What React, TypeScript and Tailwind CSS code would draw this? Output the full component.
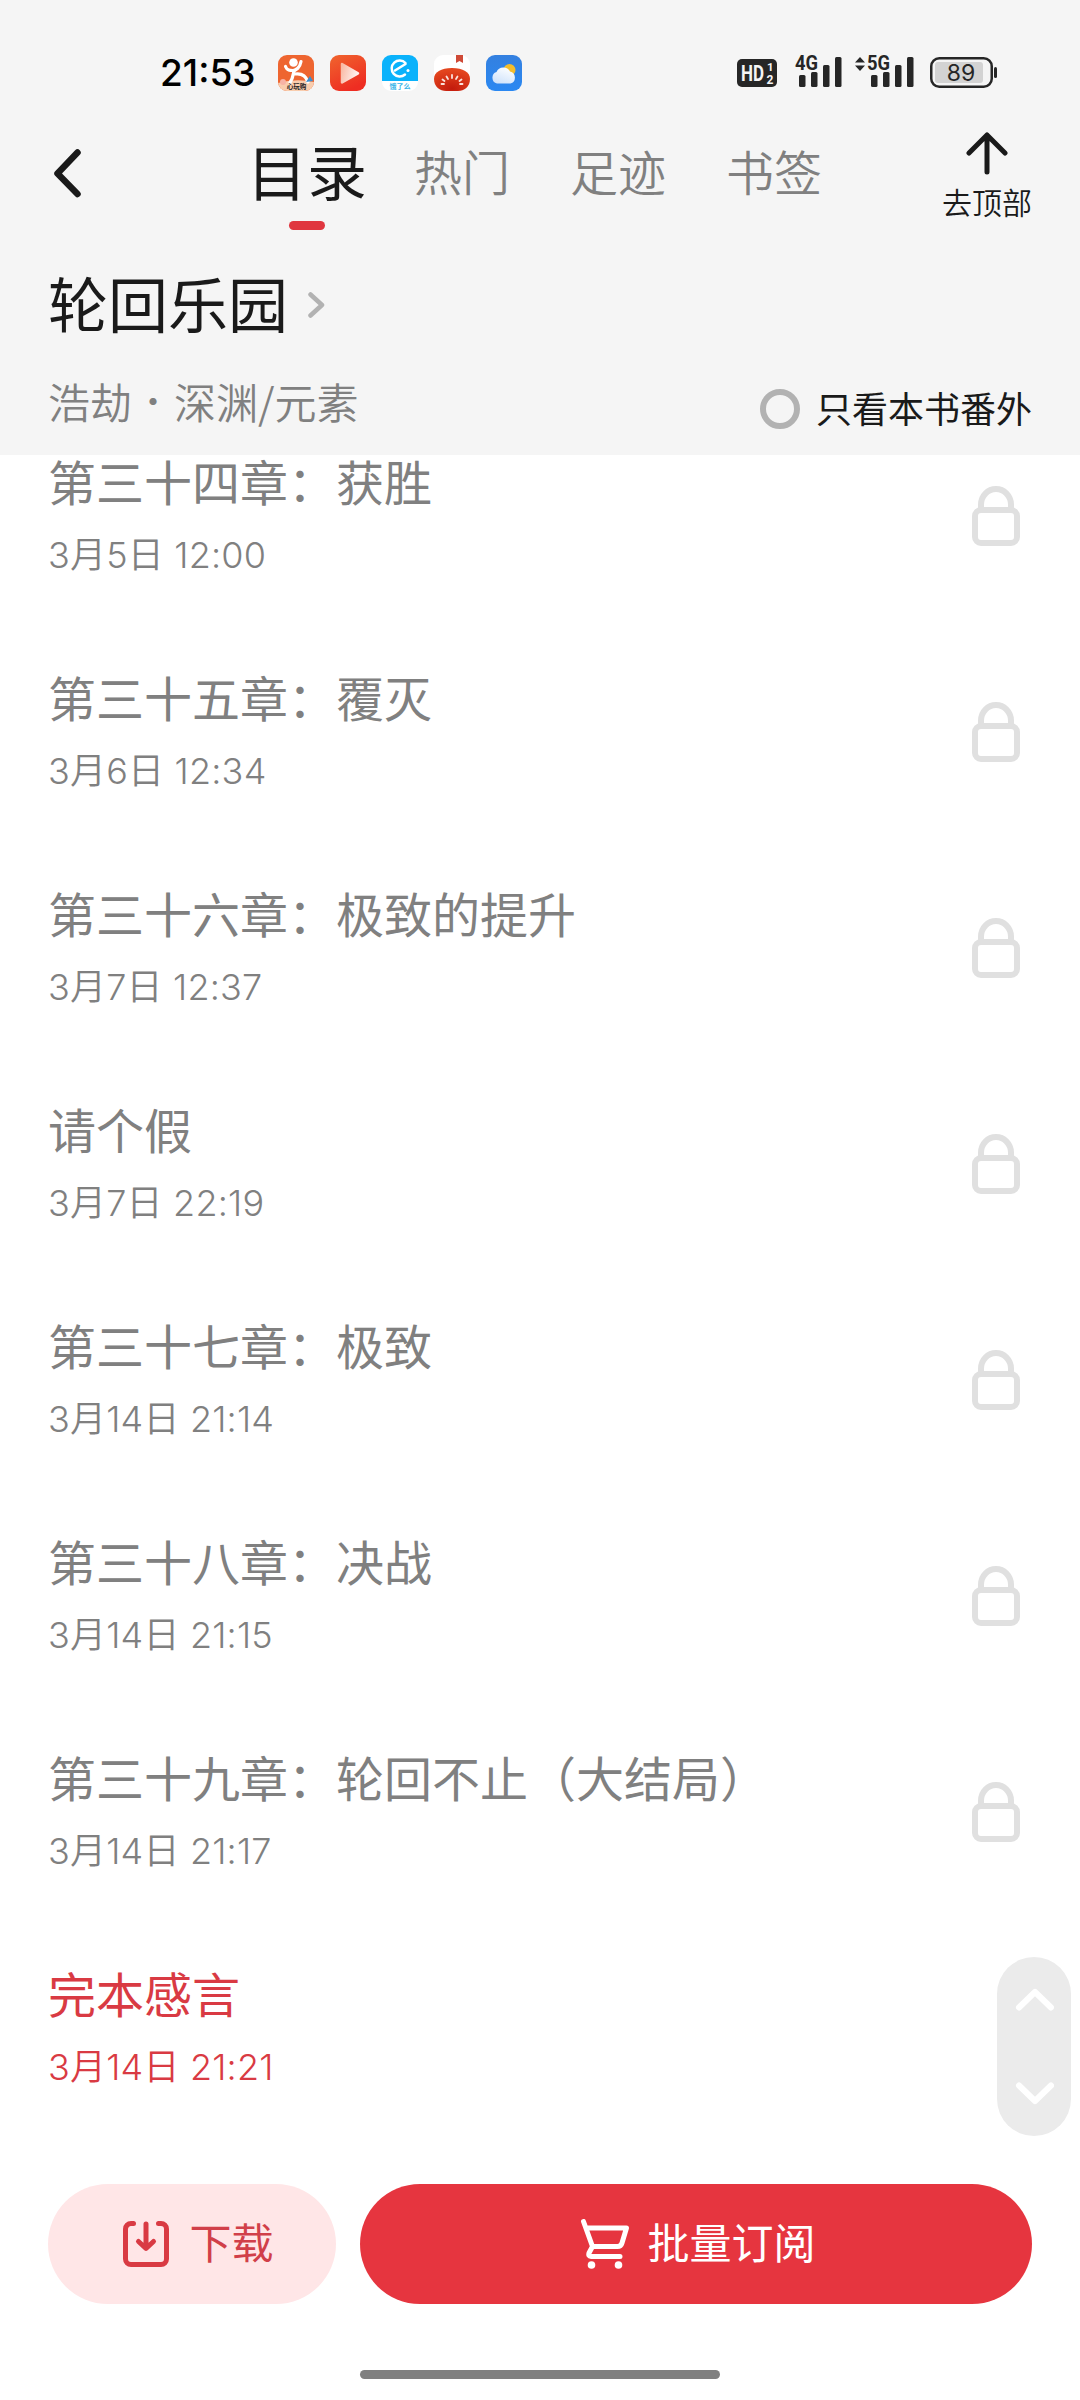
import React, { useState } from 'react';

interface Chapter {
  title: string;
  date: string;
  locked: boolean;
}

const chapters: Chapter[] = [
  { title: '第三十四章：获胜', date: '3月5日 12:00', locked: true },
  { title: '第三十五章：覆灭', date: '3月6日 12:34', locked: true },
  { title: '第三十六章：极致的提升', date: '3月7日 12:37', locked: true },
  { title: '请个假', date: '3月7日 22:19', locked: true },
  { title: '第三十七章：极致', date: '3月14日 21:14', locked: true },
  { title: '第三十八章：决战', date: '3月14日 21:15', locked: true },
  { title: '第三十九章：轮回不止（大结局）', date: '3月14日 21:17', locked: true },
  { title: '完本感言', date: '3月14日 21:21', locked: false },
];

const tabs = ['目录', '热门', '足迹', '书签'];

const LockIcon = () => (
  <svg width="48" height="60" viewBox="0 0 48 60" fill="none" stroke="#e0e0e0" strokeWidth="6">
    <rect x="3" y="24" width="42" height="33" rx="6" />
    <path d="M9 24v-5.500a15 15.500 0 0 1 30 0V24" />
  </svg>
);

const SignalBars = ({ label }: { label: string }) => (
  <svg className="overflow-visible" width="47" height="32" viewBox="0 0 47 32" fill="#262626">
    <text x="0" y="15" fontFamily="Roboto, sans-serif" fontWeight="700" fontSize="20.500" textLength="23" lengthAdjust="spacingAndGlyphs">
      {label}
    </text>
    <rect x="4" y="20" width="6.500" height="12" rx="1.500" />
    <rect x="16" y="17" width="6.500" height="15" rx="1.500" />
    <rect x="28" y="10" width="6.500" height="22" rx="1.500" />
    <rect x="40" y="2" width="6.500" height="30" rx="1.500" />
  </svg>
);

const AppIcons = () => (
  <div className="flex gap-4">
    {/* Person */}
    <svg width="36" height="36" viewBox="0 0 36 36">
      <defs>
        <clipPath id="person">
          <rect width="36" height="36" rx="9" />
        </clipPath>
      </defs>
      <g clipPath="url(#person)">
        <rect width="36" height="36" fill="#ee6530" />
        <path d="M0 28q18-5 36-1v9H0z" fill="#f9cdae" />
        <circle cx="15.500" cy="7.500" r="4.300" fill="#fff" />
        <path
          d="M7.500 11.500c1.500 4 4.500 4 7.500 4s7-3 8-9M16 15.500c-1 5-1 8-4 12M17 19c7-1 11 2 13 8"
          fill="none"
          stroke="#fff"
          strokeWidth="3.200"
          strokeLinecap="round"
        />
        <circle cx="5" cy="27" r="3" fill="#f7b3a5" />
        <path d="M28 27l4-6 3 5z" fill="#3c8fd0" />
        <text x="18.500" y="33.500" textAnchor="middle" fontSize="6.500" fontWeight="700" fill="#222">心玩购</text>
      </g>
    </svg>
    {/* Video player */}
    <svg width="36" height="36" viewBox="0 0 36 36">
      <defs>
        <linearGradient id="video" x1="0" y1="0" x2="0.500" y2="1">
          <stop offset="0" stopColor="#f0652e" />
          <stop offset="1" stopColor="#ee2d22" />
        </linearGradient>
        <linearGradient id="play" x1="0" y1="0" x2="1" y2="0.300">
          <stop offset="0" stopColor="#f9b9a3" />
          <stop offset="1" stopColor="#fff1ee" />
        </linearGradient>
      </defs>
      <rect width="36" height="36" rx="9" fill="url(#video)" />
      <path d="M12 9l16 9.300L12 27.500z" fill="url(#play)" stroke="url(#play)" strokeWidth="2.500" strokeLinejoin="round" />
    </svg>
    {/* Food delivery */}
    <svg width="36" height="36" viewBox="0 0 36 36">
      <path d="M0 9a9 9 0 0 1 9-9h18a9 9 0 0 1 9 9v17H0z" fill="#0ab2fb" />
      <path d="M0 26h36v1a9 9 0 0 1-9 9H9a9 9 0 0 1-9-9z" fill="#fff" />
      <path d="M23.500 8a8 8 0 1 0-.5 11.500M13 15.500l10.500-6.500" fill="none" stroke="#fff" strokeWidth="2.500" strokeLinecap="round" />
      <circle cx="26" cy="15.500" r="1.500" fill="#fff" />
      <text x="18" y="33.500" textAnchor="middle" fontSize="7" fontWeight="700" fill="#38b4e8">饿了么</text>
    </svg>
    {/* Tomato reader */}
    <svg width="36" height="36" viewBox="0 0 36 36">
      <defs>
        <radialGradient id="tomato" cx="0.500" cy="0.900" r="0.800">
          <stop offset="0" stopColor="#c31a0c" />
          <stop offset="1" stopColor="#e3451e" />
        </radialGradient>
      </defs>
      <rect width="36" height="32" rx="9" fill="#fff" />
      <path d="M22 0h7v8l-3.500-2L22 8z" fill="#cf4a37" />
      <path d="M0 24c0-7 7-11 18-11s18 4 18 11c0 8-6 12-12 12H12C6 36 0 32 0 24z" fill="url(#tomato)" />
      <path
        d="M18 20v3M12.500 21.500l1.500 2.500M23.500 21.500L22 24M8.500 24.500l2 1.500M27.500 24.500l-2 1.500M7.500 29h2.500M28.500 29H26"
        stroke="#fbe3dc"
        strokeWidth="1.800"
        strokeLinecap="round"
      />
    </svg>
    {/* Weather */}
    <svg width="36" height="36" viewBox="0 0 36 36">
      <defs>
        <linearGradient id="sky" x1="0" y1="0" x2="0" y2="1">
          <stop offset="0" stopColor="#3480e0" />
          <stop offset="1" stopColor="#2a88f2" />
        </linearGradient>
        <linearGradient id="cloud" x1="0.800" y1="0" x2="0.300" y2="1">
          <stop offset="0" stopColor="#fff" />
          <stop offset="1" stopColor="#cfe3fb" />
        </linearGradient>
      </defs>
      <rect width="36" height="36" rx="9" fill="url(#sky)" />
      <circle cx="23.500" cy="15" r="6" fill="#f3bd2c" />
      <path d="M11 28.500a6 6 0 0 1-.5-11.500 7.500 7.500 0 0 1 13.500-.5 6.200 6.200 0 0 1 .5 12z" fill="url(#cloud)" />
    </svg>
  </div>
);

const StatusBar = () => (
  <div className="flex h-[112px] items-start pt-[55px] pl-[160px] font-['Inter','Noto_Sans_CJK_SC',sans-serif]">
    <span className="w-[118px] text-[37px] leading-9 font-[450] text-black">21:53</span>
    <AppIcons />
    <div className="ml-[215px] flex pt-0.5">
      <svg className="mt-0.5" width="40" height="28" viewBox="0 0 40 28">
        <rect width="40" height="28" rx="5" fill="#262626" />
        <g fill="#f5f5f5" fontFamily="Roboto, sans-serif" fontWeight="700">
          <text x="4" y="22" fontSize="22.500" textLength="23" lengthAdjust="spacingAndGlyphs">HD</text>
          <text x="30" y="12" fontSize="11.500">1</text>
          <text x="29.500" y="25" fontSize="12">2</text>
        </g>
      </svg>
      <div className="-mt-0.5 ml-[18px]">
        <SignalBars label="4G" />
      </div>
      <svg className="ml-[12px]" width="12" height="14" viewBox="0 0 12 14" fill="#262626">
        <path d="M6 0l5 5.500H1zM6 14l5-5.500H1z" />
      </svg>
      <div className="-mt-0.5 ml-px">
        <SignalBars label="5G" />
      </div>
      <svg className="ml-[16px]" width="68" height="31" viewBox="0 0 68 31">
        <rect x="1.250" y="1.250" width="60.500" height="28.500" rx="8" fill="none" stroke="#262626" strokeWidth="2.500" />
        <rect x="5" y="5" width="48" height="21" rx="3" fill="#d3d3d3" />
        <rect x="64" y="10" width="3" height="11" rx="1.500" fill="#262626" />
        <text x="31" y="24" textAnchor="middle" fontSize="23" fill="#262626">89</text>
      </svg>
    </div>
  </div>
);

const App: React.FC = () => {
  const [activeTab, setActiveTab] = useState('目录');
  const [onlyExtra, setOnlyExtra] = useState(false);

  return (
    <div className="flex h-[2400px] w-[1080px] flex-col overflow-hidden bg-white font-['Noto_Sans_CJK_SC',sans-serif]">
      <header className="h-[455px] shrink-0 bg-[#f5f5f5] text-[#1a1a1a]">
        <StatusBar />

        {/* Tabs */}
        <div className="flex h-[138px] items-start">
          <button className="mt-[36px] ml-[52px]">
            <svg width="30" height="50" viewBox="0 0 30 50" fill="none" stroke="#1a1a1a" strokeWidth="6.500" strokeLinecap="round" strokeLinejoin="round">
              <path d="M25.500 4.500L5.500 25.500l20 20.500" />
            </svg>
          </button>
          <nav className="ml-[165px] flex gap-[60px] pt-[26px]">
            {tabs.map((tab) => (
              <button
                key={tab}
                onClick={() => setActiveTab(tab)}
                className={`flex h-[92px] flex-col items-center leading-[64px] ${activeTab === tab ? '-mr-[13px] text-[60px]' : 'text-[48px] font-[350] text-[#808080]'}`}
              >
                {tab}
                {activeTab === tab && <span className="mt-[19px] h-[9px] w-9 rounded-full bg-[#e0363f]" />}
              </button>
            ))}
          </nav>
          <button className="ml-[120px] flex flex-col items-center pt-[19px] text-[30px] leading-9 font-[350]">
            <svg width="42" height="44" viewBox="0 0 42 44" fill="none" stroke="#1a1a1a" strokeWidth="5" strokeLinecap="round" strokeLinejoin="round">
              <path d="M21 41V4M3 22L21 4l18 18" />
            </svg>
            <span className="mt-[8px]">去顶部</span>
          </button>
        </div>

        {/* Book title */}
        <div className="flex h-[104px] items-center pl-12">
          <h1 className="text-[60px] leading-[72px]">轮回乐园</h1>
          <svg className="mt-1 ml-[20px]" width="18" height="28" viewBox="0 0 18 28" fill="none" stroke="#b2b2b2" strokeWidth="4.500" strokeLinecap="round" strokeLinejoin="round">
            <path d="M2.500 4.500L14 15 2.500 25.500" />
          </svg>
        </div>
        <div className="flex justify-between pt-[23px] pr-12 pl-12">
          <p className="flex text-[42px] leading-[48px] font-[350] text-[#808080]">
            浩劫
            <span className="flex w-[42px] justify-center font-['Inter',sans-serif] font-bold">·</span>
            深渊/元素
          </p>
          <button onClick={() => setOnlyExtra(!onlyExtra)} className="mt-[12px] flex h-10 items-center">
            <span className={`h-10 w-10 rounded-full border-[6px] border-[#b2b2b2] ${onlyExtra ? 'bg-[#e6353f]' : ''}`} />
            <span className="mb-[5px] ml-4 text-[36px] leading-9">只看本书番外</span>
          </button>
        </div>
      </header>

      {/* Chapter list */}
      <main className="relative h-[1729px] shrink-0">
        <ul>
          {chapters.map((chapter) => (
            <li
              key={chapter.title}
              className={`flex h-[216px] justify-between pr-[60px] pl-12 ${chapter.locked ? 'text-[#808080]' : 'text-[#d93a43]'}`}
            >
              <div>
                <p className="text-[48px] leading-[50px]">{chapter.title}</p>
                <p className="mt-[26px] font-['Inter','Noto_Sans_CJK_SC',sans-serif] text-[36px] leading-[48px] font-[350] tracking-[0.2px]">{chapter.date}</p>
              </div>
              {chapter.locked && (
                <div className="pt-[31px]">
                  <LockIcon />
                </div>
              )}
            </li>
          ))}
        </ul>
        <div className="absolute right-[9px] bottom-[48px] flex h-[179px] w-[74px] flex-col items-center justify-between rounded-full bg-[#ebebeb] py-[31px]">
          <svg width="40" height="24" viewBox="0 0 40 24" fill="none" stroke="#fff" strokeWidth="6" strokeLinecap="round" strokeLinejoin="round">
            <path d="M5 19.500L21 4l16 15.500" />
          </svg>
          <svg width="40" height="24" viewBox="0 0 40 24" fill="none" stroke="#fff" strokeWidth="6" strokeLinecap="round" strokeLinejoin="round">
            <path d="M5 4.500L21 20 37 4.500" />
          </svg>
        </div>
      </main>

      {/* Bottom actions */}
      <div className="flex h-[120px] shrink-0 gap-6 px-12 text-[42px] leading-[60px]">
        <button className="flex w-[288px] items-center justify-center rounded-full bg-[#ffe6e7] pl-[13px] text-[#d13f49]">
          <svg width="46" height="46" viewBox="0 0 46 46" fill="none" stroke="#d93a43" strokeWidth="5" strokeLinecap="round" strokeLinejoin="round">
            <path d="M10.500 2.500H8A5.500 5.500 0 0 0 2.500 8v30A5.500 5.500 0 0 0 8 43.500h30a5.500 5.500 0 0 0 5.500-5.500V8A5.500 5.500 0 0 0 38 2.500h-2.500" />
            <path d="M23 3v24M15.500 20.500L23 27.500l7.500-7" />
          </svg>
          <span className="mb-[6px] ml-5">下载</span>
        </button>
        <button className="flex flex-1 items-center justify-center rounded-full bg-[#e6353f] pl-[5px] text-white">
          <svg width="48" height="50" viewBox="0 0 48 50" fill="none" stroke="#fff" strokeWidth="5" strokeLinecap="round" strokeLinejoin="round">
            <path d="M2.500 2.500l9 25M5 9h40.500l-4.500 15q-1 3.500-4.500 3.500h-25l-3.500 6.500q-1 3.500 2 3.500h29" />
            <circle cx="10.500" cy="46" r="3.800" fill="#fff" stroke="none" />
            <circle cx="37.500" cy="46" r="3.800" fill="#fff" stroke="none" />
          </svg>
          <span className="mb-[6px] ml-[18px]">批量订阅</span>
        </button>
      </div>
      <div className="mx-auto mt-[66px] h-[9px] w-[360px] shrink-0 rounded-full bg-[#808080]" />
    </div>
  );
};

export default App;
